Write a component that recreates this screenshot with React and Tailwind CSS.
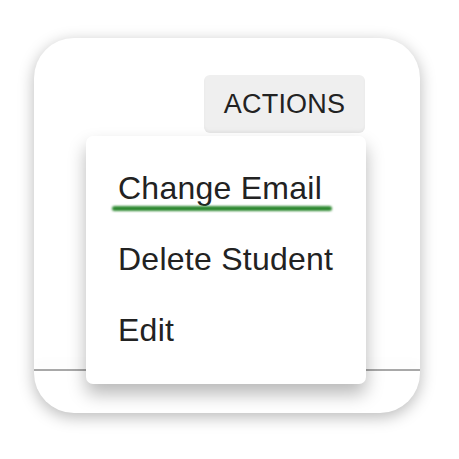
import React from 'react';

const items = ['Change Email', 'Delete Student', 'Edit'];

export default function App() {
  return (
    <div className="w-[459px] h-[459px] bg-white pt-[38px] pl-[34px]" style={{ fontFamily: '"Liberation Sans", Arial, sans-serif' }}>
      <div className="relative w-[386px] h-[375px] rounded-[40px] bg-white shadow-[0_4px_16px_rgba(0,0,0,0.28)] overflow-hidden">
        {/* toolbar with the trigger button */}
        <div className="flex justify-end pt-[37px] pr-[55px]">
          <button className="w-[161px] h-[58px] rounded-[6px] bg-[#efefef] shadow-[inset_0_-2px_3px_rgba(0,0,0,0.04)] text-[27px] text-[#222] tracking-[0.2px] leading-none flex items-center justify-center">
            ACTIONS
          </button>
        </div>

        {/* table footer divider */}
        <div className="absolute left-0 right-0 top-[331px] h-[2px] bg-[#a8a8a8] shadow-[0_-6px_10px_rgba(0,0,0,0.06)]" />

        {/* open dropdown */}
        <div className="absolute left-[52px] top-[98px] w-[280px] h-[248px] rounded-[7px] bg-white shadow-[0_10px_18px_rgba(0,0,0,0.28)] pt-[36px] pl-[32px] flex flex-col gap-[39px]">
          {items.map((label, i) => (
            <div key={label} className="relative text-[32px] leading-[32px] tracking-[0.25px] text-[#222]">
              {label}
              {i === 0 && (
                <span className="absolute left-[-6px] top-[34px] w-[220px] h-[5px] rounded-full bg-[#2f8a32] blur-[1px]" />
              )}
            </div>
          ))}
        </div>
      </div>
    </div>
  );
}
